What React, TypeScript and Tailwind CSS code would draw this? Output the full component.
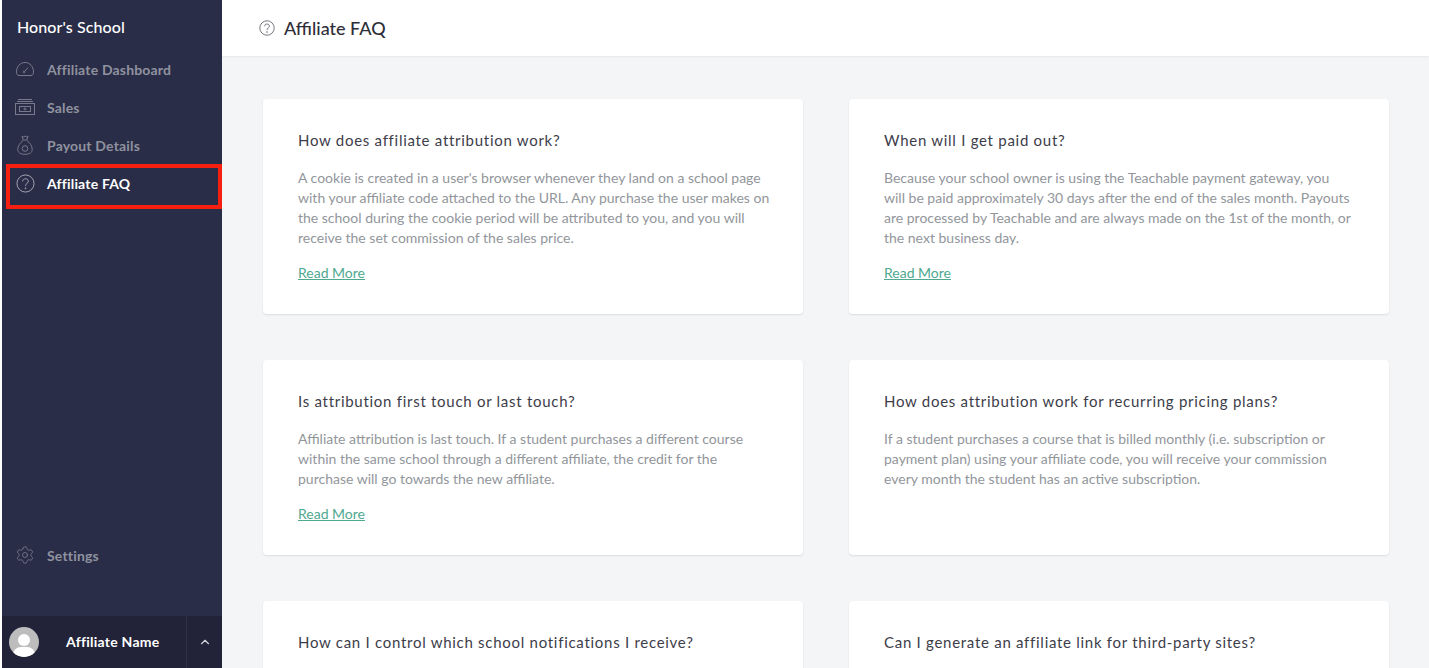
import React from "react";
import { ChevronUp, Settings } from "lucide-react";

const GaugeIcon = () => (
  <svg width="20" height="16" viewBox="0 0 20 16" fill="none" stroke="currentColor" strokeWidth="1">
    <path d="M4 14.500h12c1.500 0 2.500-1.300 2.500-3.400C18.500 5.500 14.700 1.500 10 1.500S1.500 5.500 1.500 11.100c0 2.100 1 3.400 2.500 3.400z" />
    <path d="M9.500 10.500l3.500-4" />
    <circle cx="9" cy="11" r="0.800" />
  </svg>
);

const SalesIcon = () => (
  <svg width="20" height="16" viewBox="0 0 20 16" fill="none" stroke="currentColor" strokeWidth="1">
    <path d="M3 0.500h14M2 2.500h16" />
    <rect x="0.500" y="4.500" width="19" height="11" />
    <rect x="4.500" y="7.500" width="11" height="5" />
    <circle cx="10" cy="10" r="1" />
  </svg>
);

const BagIcon = () => (
  <svg width="16" height="20" viewBox="0 0 16 20" fill="none" stroke="currentColor" strokeWidth="1">
    <path d="M5 1l1.500 1L8 1l1.500 1L11 1 9.800 5H6.200z" />
    <path d="M6 5.500C3 8 0.800 11 0.800 14.300 0.800 17.800 3.500 19.300 8 19.300s7.200-1.500 7.200-5C15.200 11 13 8 10 5.500" />
    <circle cx="8" cy="13.500" r="2.800" />
  </svg>
);

const QuestionIcon = ({ size }: { size: number }) => (
  <svg width={size} height={size} viewBox="0 0 20 20" fill="none" stroke="currentColor" strokeWidth="1">
    <circle cx="10" cy="10" r="9" />
    <path d="M7 7.800C7 6 8.300 5 10 5s3 1.100 3 2.600c0 2.300-3 2.400-3 4.900" />
    <circle cx="10" cy="15" r="0.500" />
  </svg>
);

const navItems = [
  { label: "Affiliate Dashboard", icon: <GaugeIcon /> },
  { label: "Sales", icon: <SalesIcon /> },
  { label: "Payout Details", icon: <BagIcon /> },
];

const NavRow = ({ icon, label, active }: { icon: React.ReactNode; label: string; active?: boolean }) => (
  <div className={`flex h-[38px] items-center ${active ? "text-white" : "text-[#8f929f]"}`}>
    <span className={`flex w-[45px] shrink-0 justify-center pl-[1px] ${active ? "text-[#a9abb6]" : "text-[#777a8c]"}`}>{icon}</span>
    <span className="text-[14px] font-bold tracking-[0.18px]">{label}</span>
  </div>
);

const Card = ({ title, body, more, h }: { title: string; body?: string[]; more?: boolean; h: string }) => (
  <div className={`rounded-[4px] bg-white px-[35px] pt-[31px] shadow-[0_1px_2px_rgba(0,0,0,0.1)] ${h}`}>
    <h3 className="text-[15px] leading-[20px] tracking-[0.72px] text-[#3d3d4a]">{title}</h3>
    {body && (
      <div className="mt-[18px] text-[14px] leading-[20px] text-[#92969b]">
        {body.map((line) => (
          <p key={line} className="whitespace-nowrap">{line}</p>
        ))}
      </div>
    )}
    {more && <a className="mt-[15px] block text-[14px] leading-[20px] text-[#4fa890] underline">Read More</a>}
  </div>
);

export default function App() {
  return (
    <div className="flex h-screen overflow-hidden bg-white pl-[2px] font-['Lato',sans-serif]">
      <aside className="relative flex w-[220px] shrink-0 flex-col bg-[#2a2d47]">
        <div className="flex h-[50px] items-end pb-[11px] pl-[15px] text-[16px] font-medium tracking-[0.1px] text-white">Honor's School</div>
        {navItems.map((item) => (
          <NavRow key={item.label} icon={item.icon} label={item.label} />
        ))}
        <NavRow icon={<QuestionIcon size={19} />} label="Affiliate FAQ" active />
        <div className="absolute top-[164px] left-[4px] h-[45px] w-[216px] border-4 border-[#f5200f]" />
        <div className="mt-auto mb-[42px]">
          <NavRow icon={<Settings size={20} strokeWidth={1} />} label="Settings" />
        </div>
        <div className="flex h-[52px] items-center bg-[#222339]">
          <div className="flex h-full flex-1 items-center border-r border-[#2f3048] pl-[7px]">
            <div className="relative h-[30px] w-[30px] overflow-hidden rounded-full bg-[#bdbdbd]">
              <div className="absolute top-[7px] left-[9px] h-[12px] w-[12px] rounded-full bg-white" />
              <div className="absolute top-[20px] left-[4px] h-[16px] w-[22px] rounded-full bg-white" />
            </div>
            <span className="mb-[2px] ml-[27px] text-[14px] font-bold tracking-[0.25px] text-white">Affiliate Name</span>
          </div>
          <div className="flex w-[35px] justify-center text-[#d5d6dc]">
            <ChevronUp size={14} />
          </div>
        </div>
      </aside>
      <main className="flex-1 bg-[#f4f5f7]">
        <header className="flex h-[56px] items-center gap-[9px] bg-white pl-[37px] shadow-[0_1px_2px_rgba(0,0,0,0.06)]">
          <span className="text-[#55555f]"><QuestionIcon size={16} /></span>
          <h1 className="text-[18px] font-medium text-[#2e2e38]">Affiliate FAQ</h1>
        </header>
        <div className="grid grid-cols-[540px_540px] gap-x-[46px] gap-y-[46px] pt-[43px] pl-[41px]">
          <Card
            h="h-[215px]"
            title="How does affiliate attribution work?"
            more
            body={[
              "A cookie is created in a user's browser whenever they land on a school page",
              "with your affiliate code attached to the URL. Any purchase the user makes on",
              "the school during the cookie period will be attributed to you, and you will",
              "receive the set commission of the sales price.",
            ]}
          />
          <Card
            h="h-[215px]"
            title="When will I get paid out?"
            more
            body={[
              "Because your school owner is using the Teachable payment gateway, you",
              "will be paid approximately 30 days after the end of the sales month. Payouts",
              "are processed by Teachable and are always made on the 1st of the month, or",
              "the next business day.",
            ]}
          />
          <Card
            h="h-[195px]"
            title="Is attribution first touch or last touch?"
            more
            body={[
              "Affiliate attribution is last touch. If a student purchases a different course",
              "within the same school through a different affiliate, the credit for the",
              "purchase will go towards the new affiliate.",
            ]}
          />
          <Card
            h="h-[195px]"
            title="How does attribution work for recurring pricing plans?"
            body={[
              "If a student purchases a course that is billed monthly (i.e. subscription or",
              "payment plan) using your affiliate code, you will receive your commission",
              "every month the student has an active subscription.",
            ]}
          />
          <Card h="h-[195px]" title="How can I control which school notifications I receive?" />
          <Card h="h-[195px]" title="Can I generate an affiliate link for third-party sites?" />
        </div>
      </main>
    </div>
  );
}
